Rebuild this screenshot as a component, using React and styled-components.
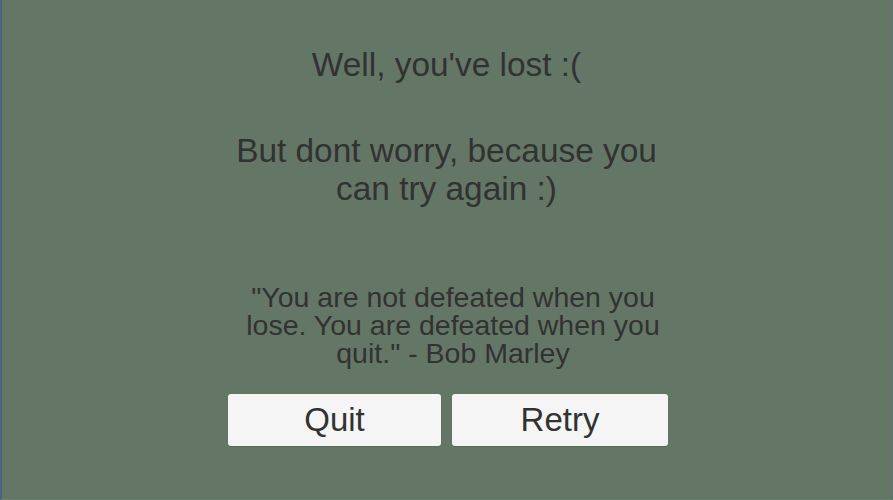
import styled, { createGlobalStyle } from "styled-components";

const GlobalStyle = createGlobalStyle`
  html, body {
    margin: 0;
    padding: 0;
    background: #647766;
  }
  * {
    box-sizing: border-box;
  }
`;

const Screen = styled.div`
  width: 893px;
  height: 500px;
  background: #647766;
  border-left: 2px solid #4b6382;
  border-right: 2px solid #5f7670;
  border-bottom: 1px solid #6e8270;
  display: flex;
  flex-direction: column;
  align-items: center;
  padding-top: 46px;
  font-family: "Liberation Sans", Arial, sans-serif;
  color: #323232;
`;

const Heading = styled.h1`
  margin: 0 0 ${(p) => p.gap || 0}px;
  width: 440px;
  font-size: 33.4px;
  line-height: 38px;
  font-weight: normal;
  text-align: center;
`;

const Quote = styled.p`
  margin: 0;
  width: 453px;
  padding-left: 13px;
  font-size: 28.5px;
  line-height: 28.2px;
  text-align: center;
`;

const ButtonRow = styled.div`
  display: flex;
  gap: 11px;
  margin-top: 26px;
  padding-left: 3px;
`;

const Button = styled.button`
  width: ${(p) => p.w}px;
  height: 52px;
  border: none;
  border-radius: 3px;
  background: #f5f5f5;
  box-shadow: 0 1px 1px rgba(0, 0, 0, 0.12);
  color: #323232;
  font-family: "Liberation Sans", Arial, sans-serif;
  font-size: 33px;
  padding: 0;
  cursor: pointer;
`;

const App = () => {
  return (
    <>
      <GlobalStyle />
      <Screen>
        <Heading gap={48}>Well, you've lost :(</Heading>
        <Heading gap={75}>But dont worry, because you can try again :)</Heading>
        <Quote>
          "You are not defeated when you lose. You are defeated when you quit." - Bob Marley
        </Quote>
        <ButtonRow>
          <Button w={213}>Quit</Button>
          <Button w={216}>Retry</Button>
        </ButtonRow>
      </Screen>
    </>
  );
};

export default App;
